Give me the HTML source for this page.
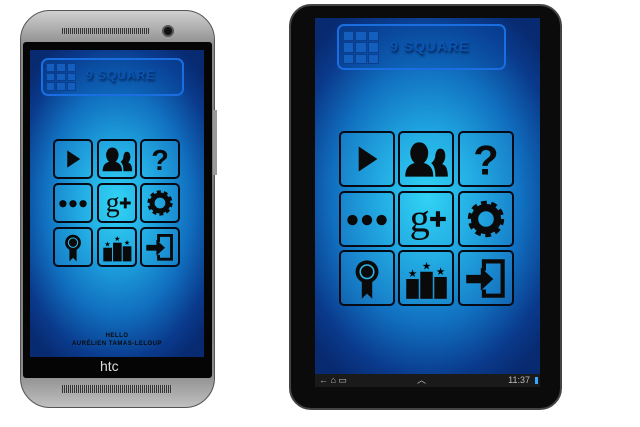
<!DOCTYPE html>
<html><head><style>
*{margin:0;padding:0;box-sizing:border-box}
body{width:640px;height:427px;background:#fff;position:relative;overflow:hidden;font-family:"Liberation Sans",sans-serif}
.a{position:absolute}
.scr{background:radial-gradient(ellipse 70% 60% at 50% 50%,#30d4f4 0%,#1fa6e0 30%,#1170c0 60%,#0a3a8c 85%,#082a70 100%)}
.cell{position:absolute;border:2px solid #050a14;border-radius:5px;background:rgba(60,210,245,.15)}
.cell svg{width:100%;height:100%}
.logo{position:absolute;border:2px solid #1a6ee0;border-radius:7px;background:rgba(10,80,170,.35)}
.sq{background:#145fbe;border:1px solid #0a3f90}
.lt{position:absolute;color:#0b55b5;font-weight:900;letter-spacing:1px;text-shadow:1px 2px 2px #041e4a}
</style></head><body>
<svg width="0" height="0" style="position:absolute"><defs>
<g id="i0"><path d="M34 26 L70 50 L34 74Z" fill="#0a0a0a"/></g>
<g id="i1"><path d="M10 84 Q10 62 28 58 Q18 48 20 34 Q24 18 37 18 Q50 18 54 34 Q56 48 46 58 Q64 62 64 84Z M60 58 Q68 52 68 42 Q70 30 77 30 Q86 30 87 42 Q88 52 81 60 Q92 62 92 84 L68 84 Q68 64 60 58Z" fill="#0a0a0a"/></g>
<g id="i2"><text x="50" y="80" font-size="80" font-weight="bold" text-anchor="middle" fill="#0a0a0a" font-family="Liberation Sans">?</text></g>
<g id="i3"><circle cx="22" cy="52" r="10" fill="#0a0a0a"/><circle cx="50" cy="52" r="10" fill="#0a0a0a"/><circle cx="78" cy="52" r="10" fill="#0a0a0a"/></g>
<g id="i4"><text x="38" y="74" font-size="78" text-anchor="middle" fill="#0a0a0a" font-family="Liberation Serif">g</text><path d="M58 50h30M73 35v30" stroke="#0a0a0a" stroke-width="8"/></g>
<g id="i5"><circle cx="50" cy="50" r="28" fill="none" stroke="#0a0a0a" stroke-width="14" stroke-dasharray="10 7.6"/><circle cx="50" cy="50" r="22" fill="none" stroke="#0a0a0a" stroke-width="14"/></g>
<g id="i6"><circle cx="50" cy="38" r="22" fill="#0a0a0a"/><circle cx="50" cy="38" r="13" fill="none" stroke="#2ab8e8" stroke-width="3"/><path d="M40 56 L40 90 L50 80 L60 90 L60 56Z" fill="#0a0a0a"/></g>
<g id="i7"><rect x="12" y="52" width="24" height="38" fill="#0a0a0a"/><rect x="39" y="38" width="24" height="52" fill="#0a0a0a"/><rect x="66" y="48" width="24" height="42" fill="#0a0a0a"/><text x="24" y="48" font-size="20" text-anchor="middle">★</text><text x="51" y="34" font-size="20" text-anchor="middle">★</text><text x="78" y="44" font-size="20" text-anchor="middle">★</text></g>
<g id="i8"><path d="M42 14 H86 V88 H42 V72 H50 V80 H78 V22 H50 V36 H42Z" fill="#0a0a0a"/><path d="M12 44 H40 V30 L64 52 L40 74 V60 H12Z" fill="#0a0a0a"/></g>
</defs></svg>

<!-- PHONE -->
<div class="a" style="left:20px;top:10px;width:195px;height:398px;border-radius:30px;background:linear-gradient(#d0d0d0,#8a8a8a 9%,#777 50%,#8a8a8a 91%,#c0c0c0);border:1px solid #555"></div>
<div class="a" style="left:23px;top:42px;width:189px;height:336px;background:#050505;border-radius:3px"></div>
<div class="a" style="left:62px;top:28px;width:88px;height:6px;background:repeating-linear-gradient(90deg,#333 0 1px,#aaa 1px 2px)"></div>
<div class="a" style="left:162px;top:25px;width:12px;height:12px;border-radius:50%;background:#111;border:2px solid #555"></div>
<div class="a" style="left:62px;top:385px;width:110px;height:8px;background:repeating-linear-gradient(90deg,#333 0 1px,#aaa 1px 2px)"></div>
<div class="a" style="left:100px;top:358px;color:#ddd;font-size:14px">htc</div>
<div class="a" style="left:213px;top:110px;width:4px;height:65px;background:#999"></div>
<div class="a scr" style="left:30px;top:50px;width:174px;height:307px"></div>
<div class="logo" style="left:41px;top:58px;width:143px;height:38px"></div>
<div class="a" style="left:46px;top:63px;width:30px;height:28px;display:grid;grid-template-columns:repeat(3,1fr);gap:1px"><div class="sq"></div><div class="sq"></div><div class="sq"></div><div class="sq"></div><div class="sq"></div><div class="sq"></div><div class="sq"></div><div class="sq"></div><div class="sq"></div></div>
<div class="lt" style="left:86px;top:68px;font-size:12px">9 SQUARE</div>
<div class="a" style="left:30px;top:332px;width:174px;text-align:center;font-size:6px;font-weight:bold;color:#0a0a0a;line-height:8px;letter-spacing:.5px">HELLO<br>AURÉLIEN TAMAS-LELOUP</div>
<div class="cell" style="left:53px;top:139px;width:40px;height:40px"><svg viewBox="0 0 100 100"><use href="#i0"/></svg></div>
<div class="cell" style="left:97px;top:139px;width:40px;height:40px"><svg viewBox="0 0 100 100"><use href="#i1"/></svg></div>
<div class="cell" style="left:140px;top:139px;width:40px;height:40px"><svg viewBox="0 0 100 100"><use href="#i2"/></svg></div>
<div class="cell" style="left:53px;top:183px;width:40px;height:40px"><svg viewBox="0 0 100 100"><use href="#i3"/></svg></div>
<div class="cell" style="left:97px;top:183px;width:40px;height:40px"><svg viewBox="0 0 100 100"><use href="#i4"/></svg></div>
<div class="cell" style="left:140px;top:183px;width:40px;height:40px"><svg viewBox="0 0 100 100"><use href="#i5"/></svg></div>
<div class="cell" style="left:53px;top:227px;width:40px;height:40px"><svg viewBox="0 0 100 100"><use href="#i6"/></svg></div>
<div class="cell" style="left:97px;top:227px;width:40px;height:40px"><svg viewBox="0 0 100 100"><use href="#i7"/></svg></div>
<div class="cell" style="left:140px;top:227px;width:40px;height:40px"><svg viewBox="0 0 100 100"><use href="#i8"/></svg></div>

<!-- TABLET -->
<div class="a" style="left:289px;top:4px;width:273px;height:406px;border-radius:22px;background:#0b0b0b;border:2px solid #444"></div>
<div class="a scr" style="left:315px;top:18px;width:225px;height:356px"></div>
<div class="a" style="left:315px;top:374px;width:225px;height:13px;background:#1a1a1a;color:#bbb;font-size:9px;line-height:13px"><span style="position:absolute;left:4px">← ⌂ ▭</span><span style="position:absolute;left:102px">︿</span><span style="position:absolute;right:10px">11:37</span><span style="position:absolute;right:2px;top:3px;width:3px;height:7px;background:#3af"></span></div>
<div class="logo" style="left:337px;top:24px;width:169px;height:46px"></div>
<div class="a" style="left:343px;top:31px;width:36px;height:33px;display:grid;grid-template-columns:repeat(3,1fr);gap:1px"><div class="sq"></div><div class="sq"></div><div class="sq"></div><div class="sq"></div><div class="sq"></div><div class="sq"></div><div class="sq"></div><div class="sq"></div><div class="sq"></div></div>
<div class="lt" style="left:390px;top:38px;font-size:14px">9 SQUARE</div>
<div class="cell" style="left:339px;top:131px;width:56px;height:56px"><svg viewBox="0 0 100 100"><use href="#i0"/></svg></div>
<div class="cell" style="left:398px;top:131px;width:56px;height:56px"><svg viewBox="0 0 100 100"><use href="#i1"/></svg></div>
<div class="cell" style="left:458px;top:131px;width:56px;height:56px"><svg viewBox="0 0 100 100"><use href="#i2"/></svg></div>
<div class="cell" style="left:339px;top:191px;width:56px;height:56px"><svg viewBox="0 0 100 100"><use href="#i3"/></svg></div>
<div class="cell" style="left:398px;top:191px;width:56px;height:56px"><svg viewBox="0 0 100 100"><use href="#i4"/></svg></div>
<div class="cell" style="left:458px;top:191px;width:56px;height:56px"><svg viewBox="0 0 100 100"><use href="#i5"/></svg></div>
<div class="cell" style="left:339px;top:250px;width:56px;height:56px"><svg viewBox="0 0 100 100"><use href="#i6"/></svg></div>
<div class="cell" style="left:398px;top:250px;width:56px;height:56px"><svg viewBox="0 0 100 100"><use href="#i7"/></svg></div>
<div class="cell" style="left:458px;top:250px;width:56px;height:56px"><svg viewBox="0 0 100 100"><use href="#i8"/></svg></div>
</body></html>
